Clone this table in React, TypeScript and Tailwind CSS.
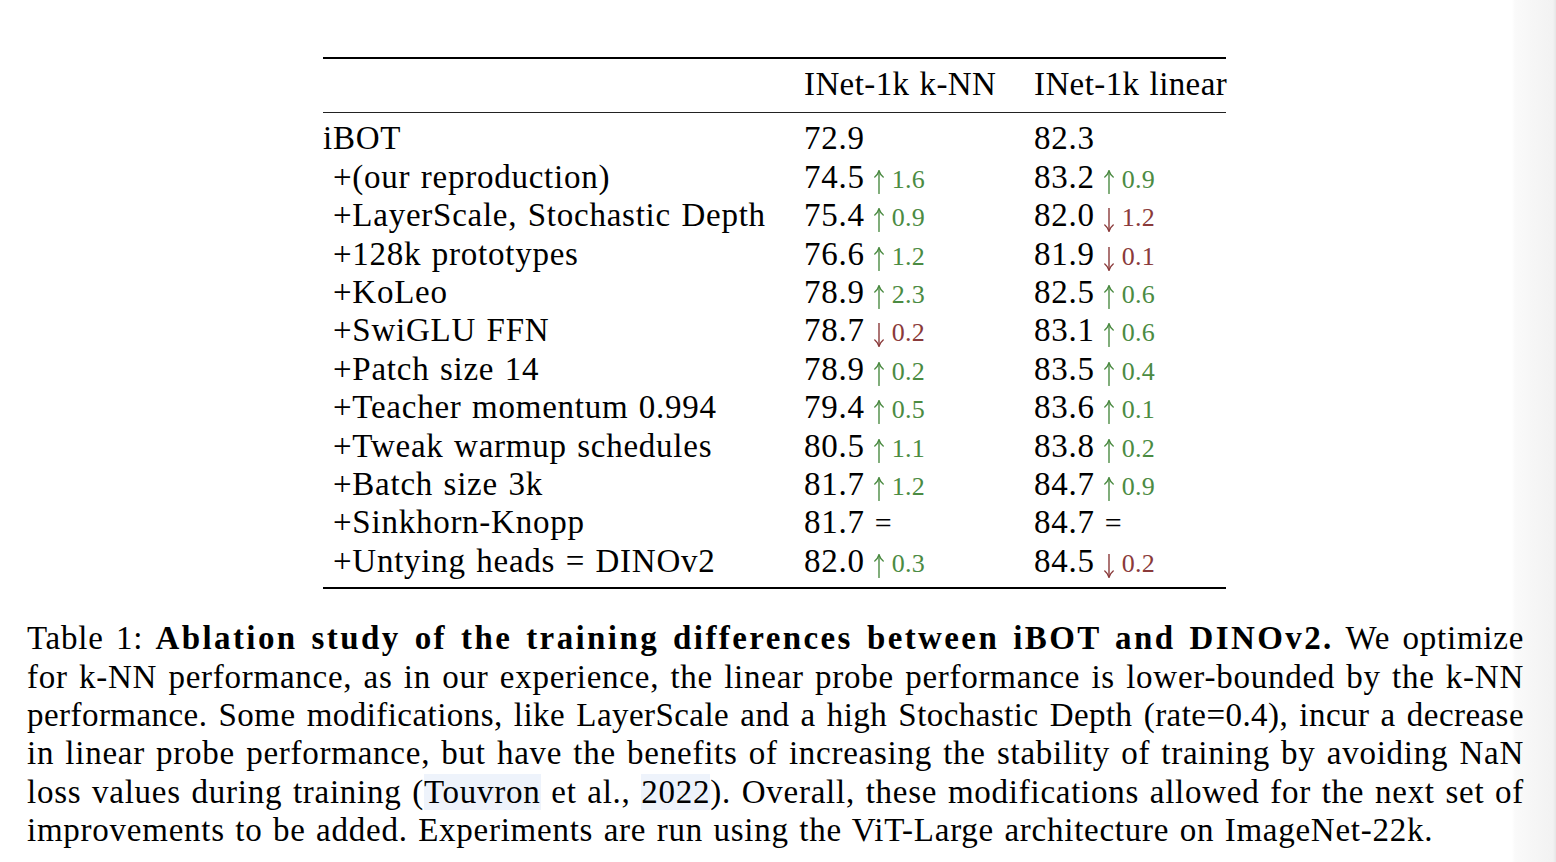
import React from "react";

type Delta = { dir: "up" | "down" | "eq"; v?: string };
type Row = { label: string; indent: boolean; a: string; da?: Delta; b: string; db?: Delta };

const rows: Row[] = [
  { label: "iBOT", indent: false, a: "72.9", b: "82.3" },
  { label: "+(our reproduction)", indent: true, a: "74.5", da: { dir: "up", v: "1.6" }, b: "83.2", db: { dir: "up", v: "0.9" } },
  { label: "+LayerScale, Stochastic Depth", indent: true, a: "75.4", da: { dir: "up", v: "0.9" }, b: "82.0", db: { dir: "down", v: "1.2" } },
  { label: "+128k prototypes", indent: true, a: "76.6", da: { dir: "up", v: "1.2" }, b: "81.9", db: { dir: "down", v: "0.1" } },
  { label: "+KoLeo", indent: true, a: "78.9", da: { dir: "up", v: "2.3" }, b: "82.5", db: { dir: "up", v: "0.6" } },
  { label: "+SwiGLU FFN", indent: true, a: "78.7", da: { dir: "down", v: "0.2" }, b: "83.1", db: { dir: "up", v: "0.6" } },
  { label: "+Patch size 14", indent: true, a: "78.9", da: { dir: "up", v: "0.2" }, b: "83.5", db: { dir: "up", v: "0.4" } },
  { label: "+Teacher momentum 0.994", indent: true, a: "79.4", da: { dir: "up", v: "0.5" }, b: "83.6", db: { dir: "up", v: "0.1" } },
  { label: "+Tweak warmup schedules", indent: true, a: "80.5", da: { dir: "up", v: "1.1" }, b: "83.8", db: { dir: "up", v: "0.2" } },
  { label: "+Batch size 3k", indent: true, a: "81.7", da: { dir: "up", v: "1.2" }, b: "84.7", db: { dir: "up", v: "0.9" } },
  { label: "+Sinkhorn-Knopp", indent: true, a: "81.7", da: { dir: "eq" }, b: "84.7", db: { dir: "eq" } },
  { label: "+Untying heads = DINOv2", indent: true, a: "82.0", da: { dir: "up", v: "0.3" }, b: "84.5", db: { dir: "down", v: "0.2" } },
];

function Arrow({ up }: { up: boolean }) {
  return (
    <svg
      width="10"
      height="24"
      viewBox="0 0 10 24"
      className="inline-block align-[-6px] ml-[9px]"
      fill="none"
      stroke="currentColor"
      strokeWidth="1.4"
      strokeLinecap="round"
    >
      {up ? (
        <>
          <path d="M5 23.5 L5 1.2" />
          <path d="M0.8 7 Q3.8 4.6 5 0.8 Q6.2 4.6 9.2 7" />
        </>
      ) : (
        <>
          <path d="M5 0.5 L5 22.8" />
          <path d="M0.8 17 Q3.8 19.4 5 23.2 Q6.2 19.4 9.2 17" />
        </>
      )}
    </svg>
  );
}

function DeltaView({ d }: { d?: Delta }) {
  if (!d) return null;
  if (d.dir === "eq") {
    return <span className="ml-[10px] text-[30px] tracking-normal">=</span>;
  }
  const up = d.dir === "up";
  return (
    <span className={up ? "text-[#4b8b42]" : "text-[#8a3a3a]"}>
      <Arrow up={up} />
      <span className="ml-[8px] text-[26px] tracking-[0.3px]">{d.v}</span>
    </span>
  );
}

function Cell({ v, d }: { v: string; d?: Delta }) {
  return (
    <div className="whitespace-nowrap">
      <span>{v}</span>
      <DeltaView d={d} />
    </div>
  );
}

const lineCls =
  "h-[38.4px] leading-[38.4px] text-justify [text-align-last:justify] whitespace-nowrap";

export default function App() {
  return (
    <div className="w-[1556px] h-[862px] overflow-hidden bg-[linear-gradient(to_right,#ffffff_0px,#ffffff_1512px,#fafafa_1515px,#f2f2f2_1553px,#e6e6e6_1556px)] font-['Liberation_Serif',serif] text-black text-[33px] tracking-[0.75px] [word-spacing:1.5px]">
      <div className="pt-[57px] pl-[27px] w-[1524px]">
        <div className="w-[1497px]">
          {/* Table */}
          <div className="w-[903px] ml-[296px]">
            <div className="h-[2px] bg-black" />
            <div className="grid grid-cols-[481px_230px_192px] mt-[6px] h-[38.4px] leading-[38.4px] whitespace-nowrap">
              <div />
              <div className="tracking-[0.4px]">INet-1k k-NN</div>
              <div className="tracking-[0.4px]">INet-1k linear</div>
            </div>
            <div className="mt-[8.6px] h-[1.5px] bg-[#222]" />
            <div className="mt-[6px]">
              {rows.map((r) => (
                <div
                  key={r.label}
                  className="grid grid-cols-[481px_230px_192px] h-[38.4px] leading-[38.4px]"
                >
                  <div className={r.indent ? "pl-[10px] whitespace-nowrap" : "whitespace-nowrap"}>{r.label}</div>
                  <Cell v={r.a} d={r.da} />
                  <Cell v={r.b} d={r.db} />
                </div>
              ))}
            </div>
            <div className="mt-[7px] h-[2px] bg-black" />
          </div>

          {/* Caption */}
          <div className="mt-[30px]">
            <div className={lineCls}>
              Table 1:{" "}
              <span className="font-bold tracking-[2.4px]">
                Ablation study of the training differences between iBOT and DINOv2.
              </span>{" "}
              We optimize
            </div>
            <div className={lineCls}>
              for k-NN performance, as in our experience, the linear probe performance is lower-bounded by the k-NN
            </div>
            <div className={`${lineCls} tracking-[0.45px] [word-spacing:0px]`}>
              performance. Some modifications, like LayerScale and a high Stochastic Depth (rate=0.4), incur a decrease
            </div>
            <div className={lineCls}>
              in linear probe performance, but have the benefits of increasing the stability of training by avoiding NaN
            </div>
            <div className={lineCls}>
              loss values during training (<span className="bg-[#eef3fb]">Touvron</span> et al.,{" "}
              <span className="bg-[#eef3fb]">2022</span>). Overall, these modifications allowed for the next set of
            </div>
            <div className="h-[38.4px] leading-[38.4px] whitespace-nowrap">
              improvements to be added. Experiments are run using the ViT-Large architecture on ImageNet-22k.
            </div>
          </div>
        </div>
      </div>
    </div>
  );
}
